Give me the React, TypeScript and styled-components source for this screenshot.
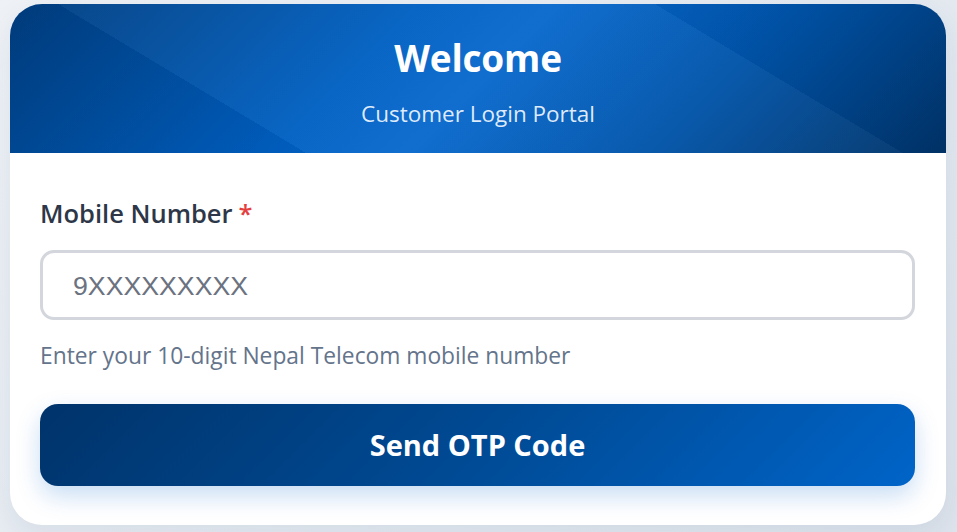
import React from "react";
import styled, { createGlobalStyle } from "styled-components";

const GlobalStyle = createGlobalStyle`
  html, body {
    margin: 0;
    padding: 0;
  }
  body {
    background: linear-gradient(135deg, #eef2f6 0%, #dde4ec 100%);
    font-family: "Open Sans", "Noto Sans", sans-serif;
    min-height: 532px;
  }
  * { box-sizing: border-box; }
`;

const Page = styled.div`
  padding: 4px 11px 6px 10px;
  min-height: 532px;
`;

const Card = styled.div`
  background: #ffffff;
  border-radius: 32px;
  overflow: hidden;
  box-shadow: 0 10px 30px rgba(0, 40, 100, 0.08);
`;

const Header = styled.header`
  height: 149px;
  padding-top: 32px;
  display: flex;
  flex-direction: column;
  align-items: center;
  color: #ffffff;
  background:
    linear-gradient(31deg, rgba(0, 20, 60, 0.06) 25%, rgba(255, 255, 255, 0.035) 25%, rgba(255, 255, 255, 0.035) 75.4%, rgba(0, 20, 60, 0.04) 75.4%),
    linear-gradient(135deg, #003d7e 0%, #0060c2 38%, #0869cd 50%, #0054aa 72%, #003266 100%);
`;

const Title = styled.h1`
  margin: 0;
  font-size: 37px;
  font-weight: 700;
  line-height: 1.2;
  letter-spacing: -0.2px;
`;

const Subtitle = styled.p`
  margin: 19px 0 0;
  font-size: 22.5px;
  line-height: 1.3;
  color: rgba(235, 244, 255, 0.95);
`;

const Body = styled.div`
  padding: 44px 31px 39px 30px;
  display: flex;
  flex-direction: column;
`;

const Label = styled.label`
  font-size: 25.5px;
  font-weight: 600;
  color: #2d3748;
  line-height: 1.3;
  margin-bottom: 20px;
`;

const Required = styled.span`
  color: #e53e3e;
  margin-left: 6px;
`;

const Input = styled.input`
  height: 70px;
  width: 100%;
  border: 3px solid #d3d6dc;
  border-radius: 14px;
  padding: 2px 30px 0;
  font-family: "Liberation Sans", Arial, sans-serif;
  font-size: 26.7px;
  color: #2d3748;
  background: #fff;
  outline: none;
  &::placeholder {
    color: #6b7280;
  }
`;

const Help = styled.p`
  margin: 21px 0 0;
  font-size: 22.8px;
  line-height: 1.3;
  color: #64748b;
`;

const Button = styled.button`
  margin-top: 33px;
  height: 82px;
  width: 100%;
  border: none;
  border-radius: 18px;
  background: linear-gradient(135deg, #00336a 0%, #004a94 50%, #0064c8 100%);
  box-shadow: 0 10px 25px rgba(0, 102, 204, 0.22);
  color: #ffffff;
  font-family: "Open Sans", "Noto Sans", sans-serif;
  font-size: 29px;
  font-weight: 700;
  cursor: pointer;
`;

export default function App() {
  return (
    <>
      <GlobalStyle />
      <Page>
        <Card>
          <Header>
            <Title>Welcome</Title>
            <Subtitle>Customer Login Portal</Subtitle>
          </Header>
          <Body>
            <Label htmlFor="mobile">
              Mobile Number<Required>*</Required>
            </Label>
            <Input id="mobile" type="tel" placeholder="9XXXXXXXXX" />
            <Help>Enter your 10-digit Nepal Telecom mobile number</Help>
            <Button type="button">Send OTP Code</Button>
          </Body>
        </Card>
      </Page>
    </>
  );
}
